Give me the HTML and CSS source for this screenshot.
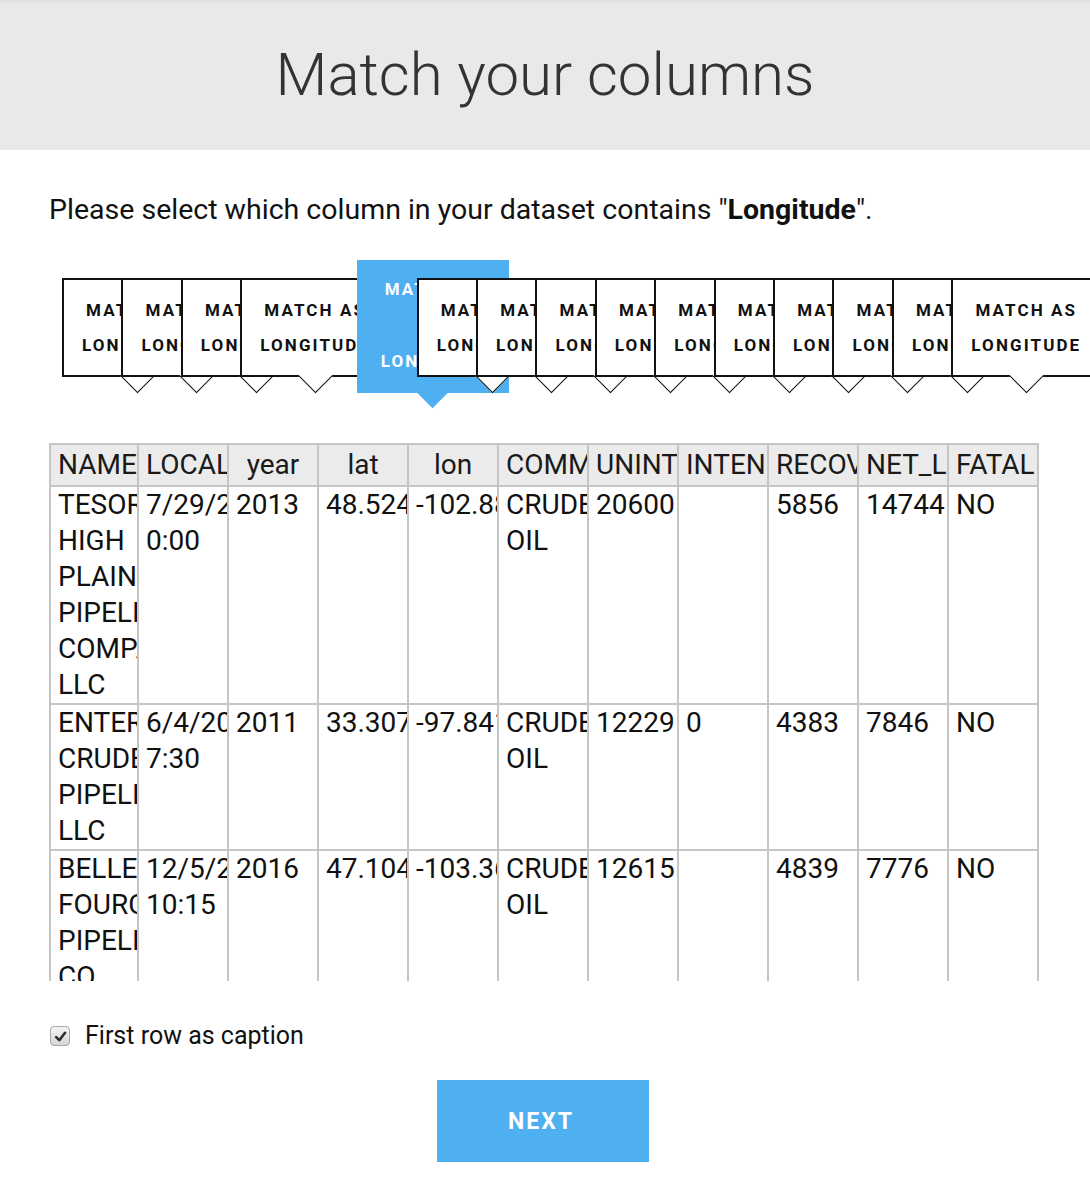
FILE: index.html
```html
<!DOCTYPE html>
<html lang="en">
<head>
<meta charset="utf-8">
<title>Match your columns</title>
<link rel="stylesheet" href="styles.css">
</head>
<body>
<header class="hero">
  <h1 class="hero-title">Match your columns</h1>
</header>
<main class="content">
  <p class="prompt">Please select which column in your dataset contains "<b>Longitude</b>".</p>

  <div class="tab-strip">
    <div class="tab"><span>MATCH AS</span><span>LONGITUDE</span></div>
    <div class="tab"><span>MATCH AS</span><span>LONGITUDE</span></div>
    <div class="tab"><span>MATCH AS</span><span>LONGITUDE</span></div>
    <div class="tab"><span>MATCH AS</span><span>LONGITUDE</span></div>
    <div class="tab tab-active"><span>MATCH AS</span><span>LONGITUDE</span></div>
    <div class="tab"><span>MATCH AS</span><span>LONGITUDE</span></div>
    <div class="tab"><span>MATCH AS</span><span>LONGITUDE</span></div>
    <div class="tab"><span>MATCH AS</span><span>LONGITUDE</span></div>
    <div class="tab"><span>MATCH AS</span><span>LONGITUDE</span></div>
    <div class="tab"><span>MATCH AS</span><span>LONGITUDE</span></div>
    <div class="tab"><span>MATCH AS</span><span>LONGITUDE</span></div>
    <div class="tab"><span>MATCH AS</span><span>LONGITUDE</span></div>
    <div class="tab"><span>MATCH AS</span><span>LONGITUDE</span></div>
    <div class="tab"><span>MATCH AS</span><span>LONGITUDE</span></div>
    <div class="tab"><span>MATCH AS</span><span>LONGITUDE</span></div>
  </div>

  <div class="table-wrap">
    <table class="data">
      <colgroup>
        <col class="col-first"><col><col><col><col><col><col><col><col><col><col>
      </colgroup>
      <thead>
        <tr>
          <th>NAME</th><th>LOCAL</th><th>year</th><th>lat</th><th>lon</th><th>COMM</th><th>UNINT</th><th>INTEN</th><th>RECOV</th><th>NET_L</th><th>FATAL</th>
        </tr>
      </thead>
      <tbody>
        <tr>
          <td>TESORO HIGH PLAINS PIPELINE COMPANY LLC</td><td>7/29/2013 0:00</td><td>2013</td><td>48.52416</td><td>-102.8851</td><td>CRUDE OIL</td><td>20600</td><td></td><td>5856</td><td>14744</td><td>NO</td>
        </tr>
        <tr>
          <td>ENTERPRISE CRUDE PIPELINE LLC</td><td>6/4/2011 7:30</td><td>2011</td><td>33.30721</td><td>-97.84172</td><td>CRUDE OIL</td><td>12229</td><td>0</td><td>4383</td><td>7846</td><td>NO</td>
        </tr>
        <tr>
          <td>BELLE FOURCHE PIPELINE CO</td><td>12/5/2016 10:15</td><td>2016</td><td>47.10424</td><td>-103.3672</td><td>CRUDE OIL</td><td>12615</td><td></td><td>4839</td><td>7776</td><td>NO</td>
        </tr>
      </tbody>
    </table>
  </div>

  <label class="caption-opt">
    <span class="check"><svg viewBox="0 0 12 12" width="13" height="13"><path d="M2 6.6 L4.9 9.4 L10.2 2.6" fill="none" stroke="#2e2e2e" stroke-width="2.4" stroke-linecap="round" stroke-linejoin="round"/></svg></span>
    <span>First row as caption</span>
  </label>

  <div class="actions">
    <button class="btn-next" type="button">NEXT</button>
  </div>
</main>
</body>
</html>
```

FILE: styles.css
```css
* { box-sizing: border-box; }

html, body {
  margin: 0;
  padding: 0;
  background: #ffffff;
  font-family: Roboto, "Liberation Sans", Arial, sans-serif;
  color: #111;
  overflow-x: hidden;
}

.hero {
  height: 150px;
  background: #e9e9e9;
  border-top: 3px solid #e2e2e2;
}

.hero-title {
  margin: 0;
  font-size: 60px;
  font-weight: 300;
  line-height: 144px;
  text-align: center;
  color: #333;
}

.content {
  padding: 0 51px 0 49px;
}

.prompt {
  margin: 42px 0 0;
  font-size: 28.5px;
  line-height: 36px;
  color: #111;
}

.prompt b {
  font-weight: 700;
}

/* ---------- tab strip ---------- */
.tab-strip {
  display: flex;
  align-items: flex-start;
  margin: 32px 0 0;
  padding-left: 13px;
  height: 155px;
}

.tab {
  position: relative;
  z-index: 0;
  flex: 0 0 150px;
  width: 150px;
  height: 99px;
  margin-top: 18px;
  margin-right: -90.6px;
  padding: 13px 0 0;
  background: #fff;
  border: 2px solid #111;
  display: flex;
  flex-direction: column;
  align-items: center;
  font-size: 17px;
  font-weight: 700;
  letter-spacing: 2.1px;
  line-height: 35px;
  color: #111;
  white-space: nowrap;
}

.tab::after {
  content: "";
  position: absolute;
  left: 50%;
  bottom: -13px;
  width: 24px;
  height: 24px;
  margin-left: -12px;
  background: #fff;
  border-right: 1.5px solid #111;
  border-bottom: 1.5px solid #111;
  transform: rotate(45deg);
}

.tab-active {
  flex-basis: 152px;
  width: 152px;
  height: 133px;
  margin-top: 0;
  margin-left: 57px;
  margin-right: -92px;
  padding-top: 10px;
  padding-left: 6px;
  gap: 37px;
  background: #4eb0f1;
  border: 2px solid #4eb0f1;
  color: #fff;
}

.tab-active::after {
  bottom: -12px;
  width: 25px;
  height: 25px;
  margin-left: -12.5px;
  background: #4eb0f1;
  border: 0;
}

/* ---------- table ---------- */
.table-wrap {
  margin-top: 28px;
  height: 538px;
  overflow: hidden;
}

.data {
  width: 988px;
  table-layout: fixed;
  border-collapse: collapse;
  font-size: 28px;
  line-height: 36px;
  color: #111;
}

.data col {
  width: 90px;
}

.data col.col-first {
  width: 88px;
}

.data th,
.data td {
  border: 2px solid #c5c5c5;
  padding: 0 7px;
  overflow: hidden;
  vertical-align: top;
}

.data th {
  padding: 2px 7px;
  background: #ebebeb;
  font-weight: 400;
  text-align: center;
  white-space: nowrap;
  color: #1a1a1a;
  box-shadow: 0 3px 2px -1px rgba(0, 0, 0, 0.22);
}

.data td {
  text-align: left;
  white-space: normal;
}

/* ---------- caption option ---------- */
.caption-opt {
  display: flex;
  align-items: center;
  gap: 15px;
  margin-top: 41px;
  padding-left: 1px;
  font-size: 25px;
  line-height: 28px;
  color: #111;
}

.check {
  width: 20px;
  height: 20px;
  border: 1px solid #a9a9a9;
  border-radius: 4px;
  background: linear-gradient(#f4f4f4, #d6d6d6);
  display: flex;
  align-items: center;
  justify-content: center;
}

.check svg {
  display: block;
}

/* ---------- actions ---------- */
.actions {
  display: flex;
  justify-content: center;
  margin-top: 30px;
  padding-right: 2px;
}

.btn-next {
  width: 212px;
  height: 82px;
  border: 0;
  background: #4eb0f1;
  color: #fff;
  font-family: Roboto, "Liberation Sans", Arial, sans-serif;
  font-size: 23px;
  font-weight: 700;
  letter-spacing: 2px;
  padding-left: 2px;
}
```
